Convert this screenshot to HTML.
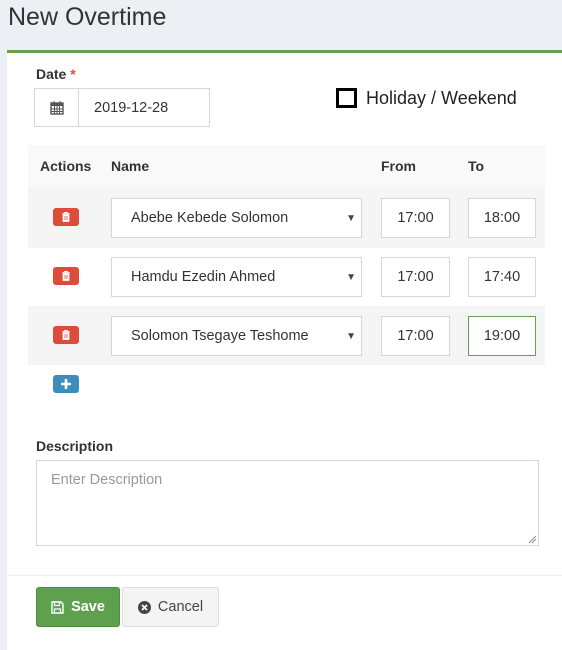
<!DOCTYPE html>
<html><head><meta charset="utf-8"><style>
*{box-sizing:border-box;margin:0;padding:0}
body{width:562px;height:636px;background:#ecf0f5;font-family:"Liberation Sans",sans-serif;color:#333;position:relative;overflow:hidden}
.abs{position:absolute}
h1{position:absolute;left:8px;top:3px;font-size:25px;font-weight:normal;color:#333}
.box{position:absolute;left:7px;top:50px;width:560px;height:600px;background:#fff;border-top:3px solid #6a9f4f}
.lbl{font-weight:bold;font-size:14px}
.inp{position:absolute;border:1px solid #d2d6de;background:#fff;font-size:14.5px;display:flex;align-items:center}
.btn-s{position:absolute;width:26px;height:18px;border-radius:3px;left:53px;display:flex;align-items:center;justify-content:center}
</style></head><body>
<h1>New Overtime</h1>
<div class="box"></div>
<div class="abs lbl" style="left:36px;top:66px">Date <span style="color:#dd4b39">*</span></div>
<div class="inp" style="left:34px;top:88px;width:176px;height:39px">
 <div style="width:44px;height:37px;border-right:1px solid #d2d6de;display:flex;align-items:center;justify-content:center">
  <svg width="14" height="14" viewBox="0 0 14 14"><rect x="1" y="2" width="12" height="11" fill="none" stroke="#555" stroke-width="1.4"/><rect x="1" y="2" width="12" height="3" fill="#555"/><path d="M4 0v3M10 0v3M1 8h12M1 10.5h12M4.5 5v8M7 5v8M9.5 5v8" stroke="#555" stroke-width="1"/></svg>
 </div>
 <span style="margin-left:15px">2019-12-28</span>
</div>
<div class="abs" style="left:336px;top:88px;width:21px;height:20px;border:3px solid #000"></div>
<div class="abs" style="left:366px;top:88px;font-size:18px;color:#222">Holiday / Weekend</div>
<div class="abs" style="left:28px;top:145px;width:517px;height:42px;background:#f9f9f9"></div>
<div class="abs lbl" style="left:40px;top:158px">Actions</div>
<div class="abs lbl" style="left:111px;top:158px">Name</div>
<div class="abs lbl" style="left:381px;top:158px">From</div>
<div class="abs lbl" style="left:468px;top:158px">To</div>
<div class="abs" style="left:28px;top:187px;width:517px;height:61px;background:#f5f5f5"></div>
<div class="abs" style="left:28px;top:306px;width:517px;height:59px;background:#f5f5f5"></div>

<div class="inp" style="left:111px;top:198px;width:251px;height:40px;padding-left:19px">Abebe Kebede Solomon<span style="position:absolute;right:5px;font-size:10px;color:#444">▼</span></div>
<div class="inp" style="left:381px;top:198px;width:69px;height:40px;justify-content:center">17:00</div>
<div class="inp" style="left:468px;top:198px;width:68px;height:40px;justify-content:center">18:00</div>

<div class="inp" style="left:111px;top:257px;width:251px;height:40px;padding-left:19px">Hamdu Ezedin Ahmed<span style="position:absolute;right:5px;font-size:10px;color:#444">▼</span></div>
<div class="inp" style="left:381px;top:257px;width:69px;height:40px;justify-content:center">17:00</div>
<div class="inp" style="left:468px;top:257px;width:68px;height:40px;justify-content:center">17:40</div>

<div class="inp" style="left:111px;top:316px;width:251px;height:40px;padding-left:19px">Solomon Tsegaye Teshome<span style="position:absolute;right:5px;font-size:10px;color:#444">▼</span></div>
<div class="inp" style="left:381px;top:316px;width:69px;height:40px;justify-content:center">17:00</div>
<div class="inp" style="left:468px;top:316px;width:68px;height:40px;justify-content:center;border-color:#6a9f4f">19:00</div>

<div class="btn-s" style="top:208px;background:#dd4b39"><svg width="8" height="10"><path d="M0 1.5h8M2.5 1.5V0h3v1.5M1 2.5h6v7H1z" fill="#fff" stroke="#fff" stroke-width=".8"/><path d="M3 4v4M5 4v4" stroke="#dd4b39" stroke-width=".8"/></svg></div>
<div class="btn-s" style="top:267px;background:#dd4b39"><svg width="8" height="10"><path d="M0 1.5h8M2.5 1.5V0h3v1.5M1 2.5h6v7H1z" fill="#fff" stroke="#fff" stroke-width=".8"/><path d="M3 4v4M5 4v4" stroke="#dd4b39" stroke-width=".8"/></svg></div>
<div class="btn-s" style="top:326px;background:#dd4b39"><svg width="8" height="10"><path d="M0 1.5h8M2.5 1.5V0h3v1.5M1 2.5h6v7H1z" fill="#fff" stroke="#fff" stroke-width=".8"/><path d="M3 4v4M5 4v4" stroke="#dd4b39" stroke-width=".8"/></svg></div>
<div class="btn-s" style="top:375px;background:#3c8dbc"><svg width="10" height="10"><path d="M5 0v10M0 5h10" stroke="#fff" stroke-width="2.6"/></svg></div>

<div class="abs lbl" style="left:36px;top:438px">Description</div>
<div class="abs" style="left:36px;top:460px;width:503px;height:86px;border:1px solid #d2d6de;padding:11px 14px;font-size:14.5px;color:#999">Enter Description
<svg class="abs" style="right:1px;bottom:1px" width="9" height="9"><path d="M1 8L8 1M4 8L8 4" stroke="#888" stroke-width="1"/></svg></div>
<div class="abs" style="left:7px;top:575px;width:555px;height:1px;background:#f0f0f0"></div>
<div class="abs" style="left:36px;top:587px;width:84px;height:40px;background:#5fa04e;border:1px solid #4e8c3e;border-radius:3px;color:#fff;font-size:14.5px;font-weight:bold;display:flex;align-items:center;justify-content:center;gap:7px">
<svg width="13" height="13"><path d="M1 1h9l2 2v9H1z" fill="none" stroke="#fff" stroke-width="1.4"/><path d="M3.5 1v3.5h5V1M3.5 12V8h6v4" fill="none" stroke="#fff" stroke-width="1.2"/></svg>Save</div>
<div class="abs" style="left:122px;top:587px;width:97px;height:40px;background:#f4f4f4;border:1px solid #ddd;border-radius:3px;color:#444;font-size:14.5px;display:flex;align-items:center;justify-content:center;gap:7px">
<svg width="13" height="13"><circle cx="6.5" cy="6.5" r="6.5" fill="#444"/><path d="M4 4l5 5M9 4l-5 5" stroke="#fff" stroke-width="1.8"/></svg>Cancel</div>
</body></html>
